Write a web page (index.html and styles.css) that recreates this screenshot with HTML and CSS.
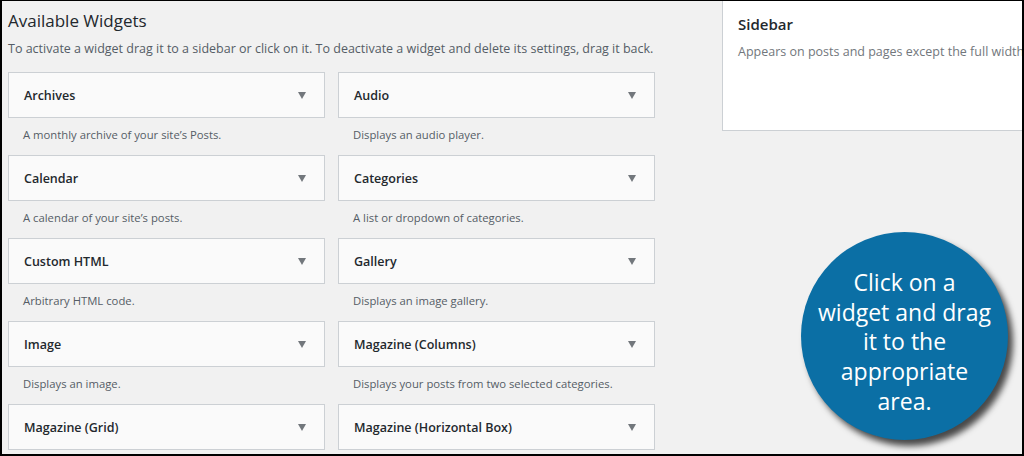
FILE: index.html
```html
<!DOCTYPE html>
<html>
<head>
    <title>Widgets</title>
    <meta name="viewport" content="width=device-width, initial-scale=1">
    <link rel="stylesheet" href="styles.css">
</head>
<body>
<div class="frame">
    <div class="available">
        <h2>Available Widgets</h2>
        <p class="intro">To activate a widget drag it to a sidebar or click on it. To deactivate a widget and delete its settings, drag it back.</p>
        <div class="grid">
            <div class="widget"><div class="bar">Archives<span class="arrow"></span></div><p>A monthly archive of your site’s Posts.</p></div>
            <div class="widget"><div class="bar">Audio<span class="arrow"></span></div><p>Displays an audio player.</p></div>
            <div class="widget"><div class="bar">Calendar<span class="arrow"></span></div><p>A calendar of your site’s posts.</p></div>
            <div class="widget"><div class="bar">Categories<span class="arrow"></span></div><p>A list or dropdown of categories.</p></div>
            <div class="widget"><div class="bar">Custom HTML<span class="arrow"></span></div><p>Arbitrary HTML code.</p></div>
            <div class="widget"><div class="bar">Gallery<span class="arrow"></span></div><p>Displays an image gallery.</p></div>
            <div class="widget"><div class="bar">Image<span class="arrow"></span></div><p>Displays an image.</p></div>
            <div class="widget"><div class="bar">Magazine (Columns)<span class="arrow"></span></div><p>Displays your posts from two selected categories.</p></div>
            <div class="widget last"><div class="bar">Magazine (Grid)<span class="arrow"></span></div></div>
            <div class="widget last"><div class="bar">Magazine (Horizontal Box)<span class="arrow"></span></div></div>
        </div>
    </div>
    <div class="sidebars">
        <div class="sidebar">
            <h3>Sidebar</h3>
            <p>Appears on posts and pages except the full width</p>
        </div>
    </div>
    <div class="bubble">Click on a<br>widget and drag<br>it to the<br>appropriate<br>area.</div>
</div>
</body>
</html>
```

FILE: styles.css
```css
body { margin: 0; background: #000; font-family: "Open Sans", "Noto Sans", Arial, sans-serif; }
.frame { position: relative; box-sizing: border-box; width: 1024px; height: 456px; overflow: hidden; background: #f1f1f1; border: 2px solid #000; border-top-width: 1px; display: flex; }
.available { width: 646px; padding-left: 6px; flex-shrink: 0; }
h2 { margin: 7px 0 0; font-size: 17px; font-weight: 400; color: #23282d; line-height: 26px; }
.intro { margin: 5px 0 0; font-size: 12.5px; color: #555d66; line-height: 20px; white-space: nowrap; }
.grid { display: grid; grid-template-columns: 317px 317px; column-gap: 13px; margin-top: 13px; }
.widget { height: 83px; }
.widget.last { height: 46px; }
.bar { box-sizing: border-box; height: 46px; background: #fafafa; border: 1px solid #ccd0d4; padding: 0 15px; display: flex; align-items: center; justify-content: space-between; font-size: 12.5px; font-weight: 600; color: #23282d; }
.arrow { width: 0; height: 0; border-left: 4.5px solid transparent; border-right: 4.5px solid transparent; border-top: 7px solid #72777c; margin-right: 3px; }
.widget p { margin: 0; padding: 8px 15px 0; font-size: 11.3px; color: #555d66; line-height: 18px; white-space: nowrap; }
.sidebars { margin-left: 68px; flex: 1; }
.sidebar { box-sizing: border-box; height: 131px; margin-top: -1px; background: #fff; border: 1px solid #ccd0d4; border-right: none; padding: 12px 15px; }
.sidebar h3 { margin: 0; font-size: 15px; font-weight: 600; color: #23282d; line-height: 22px; }
.sidebar p { margin: 8px 0 0; font-size: 12.5px; color: #72777c; white-space: nowrap; }
.bubble { position: absolute; left: 799px; top: 231px; box-sizing: border-box; width: 207px; height: 208px; border-radius: 50%; background: #0b6fa5; box-shadow: 5px 6px 6px rgba(0,0,0,0.7); color: #fff; font-family: "Open Sans", sans-serif; font-size: 23px; line-height: 29.7px; text-align: center; padding: 36px 0 0; white-space: nowrap; }
```
